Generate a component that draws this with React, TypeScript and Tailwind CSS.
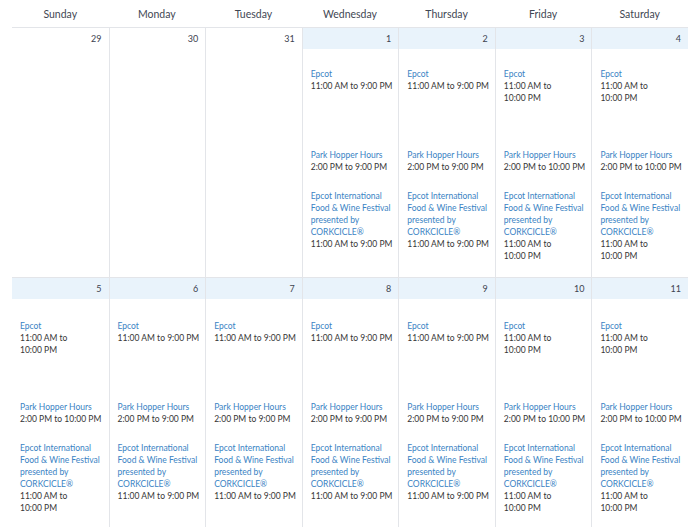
import React from "react";

type Day = { n: number; inMonth: boolean; late?: boolean };

const days = ["Sunday", "Monday", "Tuesday", "Wednesday", "Thursday", "Friday", "Saturday"];

const weeks: Day[][] = [
  [
    { n: 29, inMonth: false },
    { n: 30, inMonth: false },
    { n: 31, inMonth: false },
    { n: 1, inMonth: true, late: false },
    { n: 2, inMonth: true, late: false },
    { n: 3, inMonth: true, late: true },
    { n: 4, inMonth: true, late: true },
  ],
  [
    { n: 5, inMonth: true, late: true },
    { n: 6, inMonth: true, late: false },
    { n: 7, inMonth: true, late: false },
    { n: 8, inMonth: true, late: false },
    { n: 9, inMonth: true, late: false },
    { n: 10, inMonth: true, late: true },
    { n: 11, inMonth: true, late: true },
  ],
];

function Link({ children }: { children: React.ReactNode }) {
  return <div className="whitespace-nowrap text-[#3a83c4]">{children}</div>;
}
function Txt({ children }: { children: React.ReactNode }) {
  return <div className="whitespace-nowrap text-[#363636]">{children}</div>;
}

function Time({ start, late, nine }: { start: string; late?: boolean; nine: string }) {
  if (late)
    return (
      <>
        <Txt>{start} to</Txt>
        <Txt>10:00 PM</Txt>
      </>
    );
  return <Txt>{`${start} to ${nine}`}</Txt>;
}

function Cell({ d, first, second }: { d: Day; first: boolean; second: boolean }) {
  return (
    <div className={`flex flex-col ${first ? "" : "border-l border-[#e3e5e9]"}`}>
      <div
        className={`h-[21px] flex items-center justify-end pr-[7px] text-[9px] text-[#3d4350] ${
          d.inMonth ? "bg-[#e9f3fb]" : ""
        }`}
      >
        {d.n}
      </div>
      {d.inMonth && (
        <div className={`pl-[8px] ${second ? "pt-[21px]" : "pt-[19px]"} text-[8.5px] leading-[12px]`}>
          <div className="h-[81px]">
            <Link>Epcot</Link>
            <Time start="11:00 AM" late={d.late} nine="9:00 PM" />
          </div>
          <div className="h-[41px]">
            <Link>Park Hopper Hours</Link>
            <Txt>{d.late ? "2:00 PM to 10:00 PM" : "2:00 PM to 9:00 PM"}</Txt>
          </div>
          <div>
            <Link>Epcot International</Link>
            <Link>Food &amp; Wine Festival</Link>
            <Link>presented by</Link>
            <Link>CORKCICLE®</Link>
            <Time start="11:00 AM" late={d.late} nine="9:00 PM" />
          </div>
        </div>
      )}
    </div>
  );
}

export default function App() {
  return (
    <div className="w-[700px] h-[527px] overflow-hidden bg-white" style={{ fontFamily: "Lato, 'Liberation Sans', sans-serif" }}>
      <div className="ml-[12px] w-[676px]">
        <div className="grid grid-cols-7 h-[28px] border-b border-[#e3e5e9]">
          {days.map((d) => (
            <div key={d} className="flex items-center justify-center text-[10.5px] text-[#3f4753] pt-[3px]">
              {d}
            </div>
          ))}
        </div>
        {weeks.map((w, i) => (
          <div key={i} className="grid grid-cols-7 h-[250px] border-b border-[#e3e5e9]">
            {w.map((d, j) => (
              <Cell key={j} d={d} first={j === 0} second={i === 1} />
            ))}
          </div>
        ))}
      </div>
    </div>
  );
}
